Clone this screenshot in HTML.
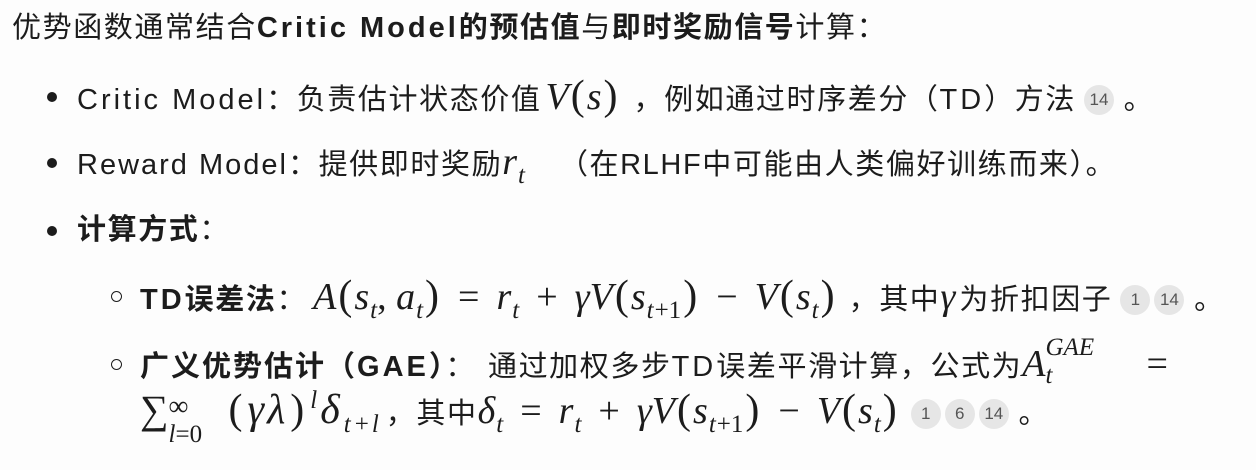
<!DOCTYPE html>
<html><head><meta charset="utf-8"><style>
body{margin:0;width:1256px;height:470px;background:#fdfdfd;overflow:hidden;color:#1c1c1c;font-family:"Liberation Sans","Noto Sans CJK SC",sans-serif;font-size:29px;letter-spacing:1.6px;}
.l{position:absolute;white-space:nowrap;line-height:44px;}
.e{letter-spacing:3px}
b{font-weight:bold}
.m{font-family:"Liberation Serif","DejaVu Serif",serif;font-size:38px;letter-spacing:0;margin-right:4px}
.i{font-style:italic}
.o{margin:0 17px}
sub,sup{font-size:25px;line-height:0;margin-left:1px}
.p{font-size:42px;font-family:"Liberation Serif",serif;margin:0 2px}
.bd{display:inline-block;width:30px;height:30px;border-radius:15px;background:#e6e6e6;color:#555;font-size:17px;letter-spacing:0;text-align:center;line-height:30px;vertical-align:4px;margin-left:8px}
.bd+.bd{margin-left:4px}
.dot{position:absolute;width:10px;height:10px;border-radius:5px;background:#1c1c1c}
.cir{position:absolute;width:9px;height:9px;border-radius:6px;border:1.8px solid #1c1c1c}
.st{display:inline-block;position:relative;width:58px;height:30px;vertical-align:-8px}
</style></head><body>
<div class="l" style="left:12px;top:6px">优势函数通常结合<b><span class="e">Critic Model</span>的预估值</b>与<b>即时奖励信号</b>计算：</div>

<div class="dot" style="left:47px;top:92px"></div>
<div class="l" style="left:77px;top:74px"><span class="e">Critic Model</span>：负责估计状态价值<span class="m" style="margin-left:4px;margin-right:14px"><span class="i">V</span><span class="p">(</span><span class="i">s</span><span class="p">)</span></span>，例如通过时序差分（<span class="e">TD</span>）方法<span class="bd">14</span> 。</div>

<div class="dot" style="left:47px;top:158px"></div>
<div class="l" style="left:77px;top:140px"><span style="letter-spacing:2px">Reward Model</span>：提供即时奖励<span class="m i" style="margin-right:34px">r<sub>t</sub></span>（在RLHF中可能由人类偏好训练而来）。</div>

<div class="dot" style="left:47px;top:226px"></div>
<div class="l" style="left:77px;top:208px"><b>计算方式</b>：</div>

<div class="cir" style="left:111px;top:291px"></div>
<div class="l" style="left:140px;top:274px"><b><span class="e">TD</span>误差法</b>：<span class="m" style="margin-left:6px;margin-right:12px"><span class="i">A</span><span class="p">(</span><span class="i">s<sub>t</sub></span>, <span class="i">a<sub>t</sub></span><span class="p">)</span><span class="o">=</span><span class="i">r<sub>t</sub></span><span class="o">+</span><span class="i">γV</span><span class="p">(</span><span class="i">s<sub>t</sub></span><sub>+1</sub><span class="p">)</span><span class="o">−</span><span class="i">V</span><span class="p">(</span><span class="i">s<sub>t</sub></span><span class="p">)</span></span>，其中<span class="m i">γ</span>为折扣因子<span class="bd">1</span><span class="bd">14</span> 。</div>

<div class="cir" style="left:111px;top:359px"></div>
<div class="l" style="left:140px;top:342px"><b style="letter-spacing:2px">广义优势估计（<span class="e">GAE</span>）</b>：<span style="margin-left:12px">通过加权多步<span class="e">TD</span>误差平滑计算，公式为</span><span class="m"><span class="i">A</span><span style="display:inline-block;position:relative;width:84px;height:20px"><span class="i" style="position:absolute;left:0;top:-30px;font-size:25px">GAE</span><span class="i" style="position:absolute;left:0;top:-2px;font-size:25px">t</span></span><span class="o">=</span></span></div>
<div class="l" style="left:140px;top:388px"><span class="m"><span style="font-size:40px">∑</span><span class="st"><span style="position:absolute;left:0;top:-16px;font-size:28px">∞</span><span style="position:absolute;left:0;top:12px;font-size:25px"><i>l</i>=0</span></span><span style="font-size:42px;letter-spacing:3px"><span class="p">(</span><span class="i">γλ</span><span class="p">)</span><sup class="i">l</sup><span class="i">δ<sub>t</sub></span><sub>+<span class="i">l</span></sub></span></span>，其中<span class="m"><span class="i">δ<sub>t</sub></span><span class="o">=</span><span class="i">r<sub>t</sub></span><span class="o">+</span><span class="i">γV</span><span class="p">(</span><span class="i">s<sub>t</sub></span><sub>+1</sub><span class="p">)</span><span class="o">−</span><span class="i">V</span><span class="p">(</span><span class="i">s<sub>t</sub></span><span class="p">)</span></span><span class="bd">1</span><span class="bd">6</span><span class="bd">14</span> 。</div>
</body></html>
